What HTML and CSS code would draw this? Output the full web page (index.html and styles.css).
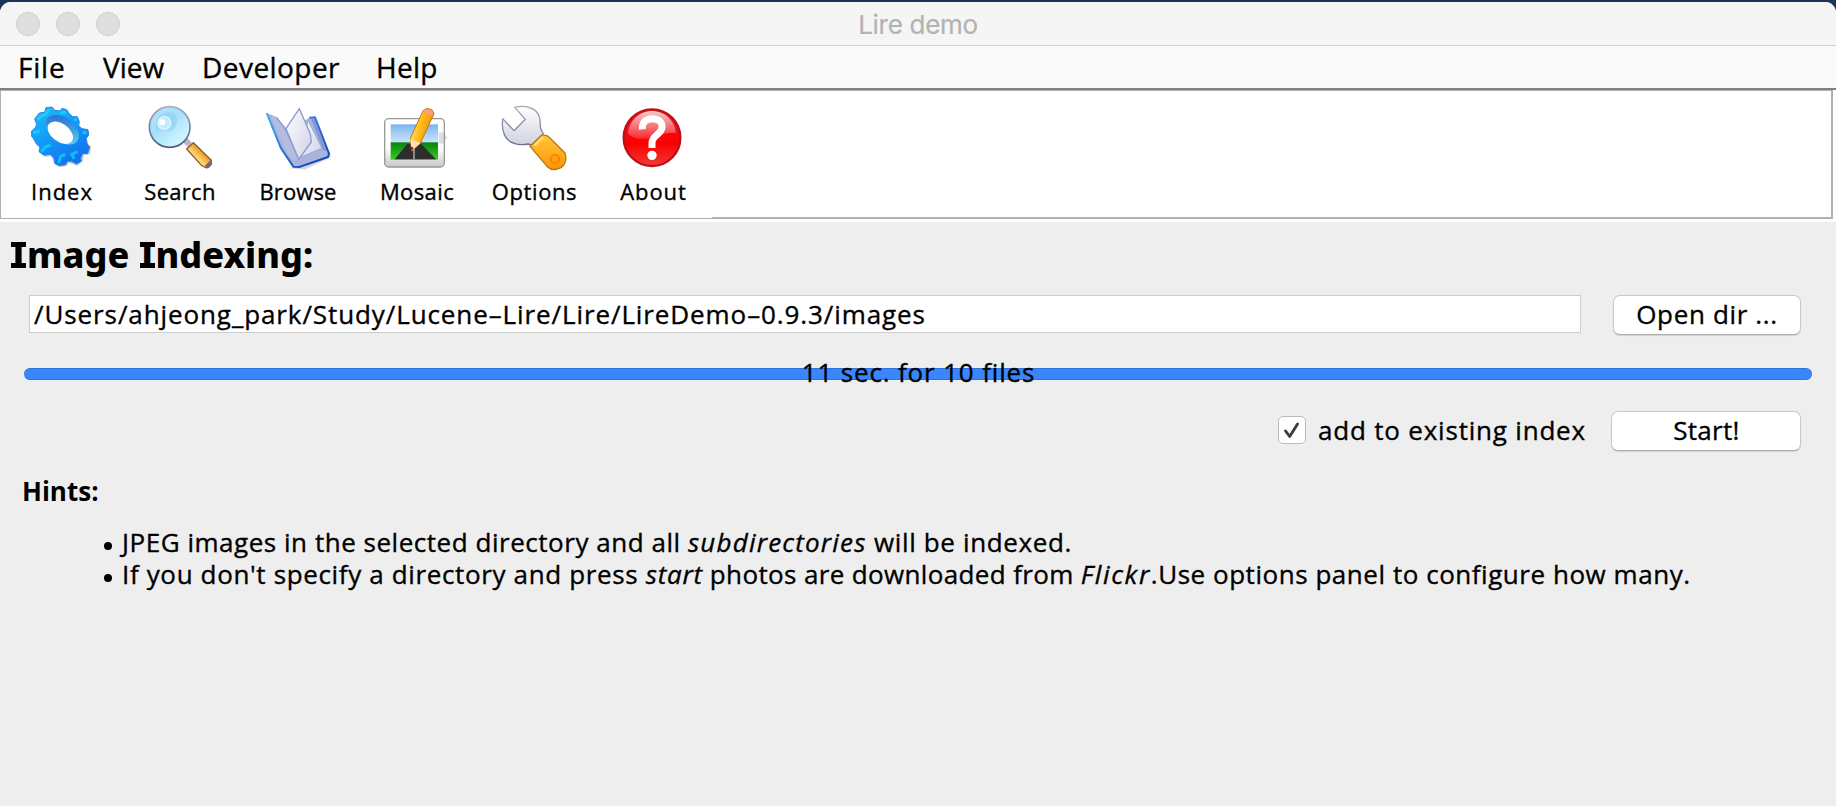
FILE: index.html
```html
<!DOCTYPE html>
<html lang="en">
<head>
<meta charset="utf-8">
<title>Lire demo</title>
<link rel="stylesheet" href="styles.css">
</head>
<body>
<div class="window">
  <header class="titlebar">
    <div class="lights"><i></i><i></i><i></i></div>
    <span class="t title">Lire demo</span>
  </header>
  <nav class="menubar">
    <span class="m-file">File</span>
    <span class="m-view">View</span>
    <span class="m-dev">Developer</span>
    <span class="m-help">Help</span>
  </nav>
  <div class="toolbar">
    <div class="tools">
    <div class="tool">
      <svg viewBox="84 54 204 204">
        <defs>
          <linearGradient id="gear" x1="0" y1="0" x2=".6" y2="1"><stop offset="0" stop-color="#35b4f5"/><stop offset=".35" stop-color="#12a9fb"/><stop offset="1" stop-color="#1372ee"/></linearGradient>
          <linearGradient id="hole" x1="0" y1="0" x2="1" y2="1"><stop offset="0" stop-color="#1e62c8"/><stop offset=".5" stop-color="#3f9ee8"/><stop offset="1" stop-color="#67e4fb"/></linearGradient>
        </defs>
        <path d="M122 206L140 216 154 214 166 240 182 247 202 242 206 234 232 243 250 226 252 210 270 208 274 186 264 176 240 200 160 210z" fill="#b9bcc8" opacity=".7"/>
        <path d="M134 82L138 68 156 66 164 76 180 78 186 70 200 74 208 86 218 95 232 95 238 110 236 122 246 131 264 134 266 150 259 160 262 178 269 186 263 206 248 206 242 219 244 229 230 237 214 229 202 229 197 239 178 242 164 235 162 219 150 208 132 211 117 200 120 186 110 178 100 160 95 154 95 138 106 128 110 118 104 102 118 84z" fill="url(#gear)" stroke="#2385ec" stroke-width="3" stroke-linejoin="round"/>
        <path d="M112 104l14-12 12-4 10-16M100 144l20-6M124 200l12-14 16-6M176 234l6-20 14-6M222 222l-6-14 16-8M180 84l18-2M222 104l8 0M248 142l12 2" stroke="#15dffb" stroke-width="9" fill="none" opacity=".65"/>
        <ellipse cx="187" cy="134" rx="56" ry="36" transform="rotate(37 187 134)" fill="url(#hole)"/>
        <ellipse cx="181" cy="143" rx="43" ry="27" transform="rotate(37 181 143)" fill="#fff"/>
      </svg>
      <span class="t l1">Index</span>
    </div>
    <div class="tool">
      <svg viewBox="438 54 204 204">
        <defs>
          <linearGradient id="lens" x1="0" y1="0" x2=".8" y2="1"><stop offset="0" stop-color="#b4e2fb"/><stop offset=".45" stop-color="#a5e0fb"/><stop offset="1" stop-color="#d9fcff"/></linearGradient>
          <linearGradient id="rim" x1="0" y1="0" x2="0" y2="1"><stop offset="0" stop-color="#a9adc0"/><stop offset="1" stop-color="#545a80"/></linearGradient>
          <linearGradient id="grip" x1="0" y1="1" x2="1" y2="0"><stop offset="0" stop-color="#b36a10"/><stop offset=".4" stop-color="#ffd977"/><stop offset=".6" stop-color="#f0a52e"/><stop offset="1" stop-color="#8e5a20"/></linearGradient>
        </defs>
        <path d="M548 172l14-14 14 16-12 12z" fill="#b7b8cc"/>
        <path d="M560 192l20-19 54 53-2 14-12 9-16-8z" fill="url(#grip)" stroke="#8a5a2a" stroke-width="4"/>
        <path d="M614 243l18-17 5 10-10 13z" fill="#6f6580"/>
        <circle cx="509" cy="126" r="61" fill="url(#lens)" stroke="url(#rim)" stroke-width="5"/>
        <path d="M472 142c-14-34 6-62 38-60 24 4 30 34 8 52-12 8-30 6-42-4" fill="#86cdf2" opacity=".5"/>
        <circle cx="493" cy="114" r="19" fill="#c2ebfc" stroke="#e0f6ff" stroke-width="4"/>
        <circle cx="487" cy="112" r="9" fill="#fff"/>
      </svg>
      <span class="t l2">Search</span>
    </div>
    <div class="tool">
      <svg viewBox="72 54 204 204">
        <defs>
          <linearGradient id="cover" x1="0" y1="0" x2="1" y2="1"><stop offset="0" stop-color="#39b2f2"/><stop offset=".5" stop-color="#2f6fd0"/><stop offset="1" stop-color="#0b3fb8"/></linearGradient>
          <linearGradient id="page" x1="0" y1="0" x2="1" y2="1"><stop offset="0" stop-color="#fff"/><stop offset="1" stop-color="#cfd1e6"/></linearGradient>
        </defs>
        <path d="M150 250l44 4 76-36 6-12-40 20z" fill="#c9c9d0" opacity=".7"/>
        <path d="M80 84l30 12 28 34 22 0 50-34 16 0 42 110-2 10-86 30-22-2-34-54z" fill="#a9b4dd"/>
        <path d="M94 95l18 2 26 40 38 84-18 4-18-22z" fill="#b4bcdf"/>
        <path d="M204 106l42 84-68 28z" fill="url(#page)" stroke="#9ba6d4" stroke-width="3"/>
        <path d="M110 98l26 34 40 88" fill="none" stroke="#8b9ad0" stroke-width="4"/>
        <path d="M80 84L122 188 160 245 178 246 264 216 267 206 225 97 208 98" fill="none" stroke="url(#cover)" stroke-width="6" stroke-linejoin="round"/>
        <path d="M178 71l-40 60 38 92 38-52-3-24z" fill="url(#page)" stroke="#8b9ad0" stroke-width="4"/>
        <path d="M212 100l10 0 38 98-10-2z" fill="#7f98d4"/>
      </svg>
      <span class="t l3">Browse</span>
    </div>
    <div class="tool">
      <svg viewBox="426 54 204 204">
        <defs>
          <linearGradient id="frame" x1="0" y1="0" x2="0" y2="1"><stop offset=".6" stop-color="#fff"/><stop offset="1" stop-color="#c8c8c8"/></linearGradient>
          <linearGradient id="sky" x1="0" y1="0" x2="0" y2="1"><stop offset="0" stop-color="#7cb4f0"/><stop offset="1" stop-color="#d3e8fb"/></linearGradient>
          <linearGradient id="grass" x1="0" y1="0" x2="0" y2="1"><stop offset="0" stop-color="#0a7f14"/><stop offset="1" stop-color="#35cf1a"/></linearGradient>
          <linearGradient id="pencil" x1="0" y1="0" x2="1" y2=".4"><stop offset="0" stop-color="#fff09a"/><stop offset=".5" stop-color="#ffbf1a"/><stop offset="1" stop-color="#e88a10"/></linearGradient>
        </defs>
        <path d="M612 144l10 14-10 14z" fill="#b5b5b5" opacity=".5"/>
        <rect x="434" y="101" width="179" height="145" rx="12" fill="url(#frame)" stroke="#999" stroke-width="4"/>
        <path d="M596 142h16v34h-16z" fill="#aaa" opacity=".4"/>
        <rect x="452" y="118" width="142" height="58" fill="url(#sky)"/>
        <rect x="452" y="172" width="142" height="52" fill="url(#grass)"/>
        <path d="M464 223l38-46 42 0 44 46z" fill="#2d2d2d"/>
        <path d="M522 186v37" stroke="#bbb" stroke-width="4"/>
        <path d="M511 160L549 77 560 70 576 74 582 86 541 175 515 198z" fill="url(#pencil)" stroke="#c8701e" stroke-width="3"/>
        <path d="M511 162l30 12-26 24z" fill="#ffe0b8"/>
        <path d="M512 184l9 4-7 12z" fill="#8c2f12"/>
        <path d="M549 77l10-7 18 6 3 12-5 6-27-12z" fill="#f5a08c" opacity=".75"/>
      </svg>
      <span class="t l4">Mosaic</span>
    </div>
    <div class="tool">
      <svg viewBox="90 54 204 204">
        <defs>
          <linearGradient id="steel" x1="0" y1="0" x2="0" y2="1"><stop offset="0" stop-color="#fff"/><stop offset="1" stop-color="#cfd2de"/></linearGradient>
          <linearGradient id="steelEdge" x1="0" y1="0" x2="0" y2="1"><stop offset="0" stop-color="#a9acba"/><stop offset="1" stop-color="#6a6e98"/></linearGradient>
          <linearGradient id="handle" x1="0" y1="0" x2="0" y2="1"><stop offset="0" stop-color="#ffc83c"/><stop offset="1" stop-color="#ff9406"/></linearGradient>
        </defs>
        <path d="M134 67c32-8 66 2 74 28 4 14 2 26 4 36l8 16-30 34-16-4c-30 6-58-2-70-26-8-16-8-34-6-50l34 36 34-34z" fill="url(#steel)" stroke="url(#steelEdge)" stroke-width="4" stroke-linejoin="round"/>
        <path d="M180 184l36-35 18 4 50 50c8 18 2 40-18 48-12 4-26 2-34-6z" fill="url(#handle)" stroke="#b87516" stroke-width="4"/>
        <path d="M193 182l26-25" stroke="#ffe078" stroke-width="6"/>
        <circle cx="255" cy="222" r="13" fill="#ff9f0a" stroke="#e77f06" stroke-width="4"/>
      </svg>
      <span class="t l5">Options</span>
    </div>
    <div class="tool">
      <svg viewBox="444 54 204 204">
        <defs>
          <linearGradient id="red" x1="0" y1="0" x2="0" y2="1"><stop offset="0" stop-color="#e8202a"/><stop offset=".6" stop-color="#fb0000"/><stop offset="1" stop-color="#f03a3a"/></linearGradient>
          <linearGradient id="gloss" x1="0" y1="0" x2="0" y2="1"><stop offset="0" stop-color="#fff" stop-opacity=".75"/><stop offset="1" stop-color="#fff" stop-opacity=".15"/></linearGradient>
        </defs>
        <circle cx="546" cy="158" r="85" fill="url(#red)" stroke="#bd1018" stroke-width="7"/>
        <path d="M474 146c4-40 34-68 72-68s68 28 72 66c-30-4-50 8-74 14s-50 6-70-12z" fill="url(#gloss)"/>
        <path d="M517 133c-2-22 12-32 30-32 20 0 31 12 29 26-2 22-30 24-30 46v16" fill="none" stroke="#fff" stroke-width="21"/>
        <circle cx="546" cy="211" r="14" fill="#fff"/>
      </svg>
      <span class="t l6">About</span>
    </div>
    </div>
    <div class="toolrest"></div>
  </div>
  <main>
    <h1><span class="slab">I</span>mage <span class="slab">I</span>ndexing:</h1>
    <div class="row pathrow">
      <div class="field">/Users/ahjeong_park/Study/Lucene–Lire/Lire/LireDemo–0.9.3/images</div>
      <div class="btn open">Open dir ...</div>
    </div>
    <div class="progress"><span class="t g">11 sec. for 10 files</span></div>
    <div class="row startrow">
      <div class="check"><svg viewBox="0 0 28 28"><path d="M7 15l4.500 6 8.500-13.500" fill="none" stroke="#3c3c3c" stroke-width="3" stroke-linecap="round" stroke-linejoin="round"/></svg></div>
      <span class="t a">add to existing index</span>
      <div class="btn start">Start!</div>
    </div>
    <div class="hints">Hints:</div>
    <ul>
      <li><span class="k1">JPEG images in the selected directory and all </span><em class="k2">subdirectories</em><span class="k3"> will be indexed.</span></li>
      <li><span class="k4">If you don't specify a directory and press </span><em class="k5">start</em><span class="k6"> photos are downloaded from </span><em class="k7">Flickr</em><span class="k8">.Use options panel to configure how many.</span></li>
    </ul>
  </main>
</div>
</body>
</html>
```
FILE: styles.css
```css
* { box-sizing: border-box; }
body { margin: 0; background: #1d3258; font-family: "Open Sans", "Noto Sans", sans-serif; font-size: 26px; color: #000; }
.window { margin-top: 2px; height: 804px; border-radius: 11px 11px 0 0; overflow: hidden; background: #eee; -webkit-text-stroke: .35px currentColor; }
.t { white-space: pre; }
.titlebar { height: 44px; background: #f5f5f5; border-bottom: 1px solid #cfcfcf; display: grid; grid-template-columns: 1fr auto 1fr; align-items: center; }
.lights { display: flex; gap: 16px; padding-left: 16px; }
.lights i { width: 24px; height: 24px; border-radius: 50%; background: #dedede; border: 1px solid #cdcdcd; }
.title { font-family: Inter, sans-serif; color: #b2b2b2; letter-spacing: -.3px; padding-top: 2px; -webkit-text-stroke: .2px #b2b2b2; }
.menubar { height: 44px; background: #fafafa; border-bottom: 2px solid #808080; display: flex; font-size: 28px; line-height: 42px; }
.m-file { width: 85px; padding-left: 18px; letter-spacing: .8px; }
.m-view { width: 100px; padding-left: 18px; }
.m-dev { width: 174px; padding-left: 17px; letter-spacing: .45px; }
.m-help { padding-left: 17px; letter-spacing: .3px; }
.toolbar { height: 132px; background: #fff; display: flex; padding: 0 3px 3px 0; }
.tools { width: 712px; display: flex; border: 1px solid #b0b0b0; border-right: 0; padding-left: 2px; }
.toolrest { flex: 1; border: solid #b0b0b0; border-width: 1px 2px 2px 0; }
.tool { width: 118px; padding-top: 12px; display: flex; flex-direction: column; align-items: center; font-size: 22px; line-height: 30px; }
.tool svg { width: 68px; height: 68px; margin-bottom: 5px; }
.l1 { letter-spacing: 1px; }
.l2 { letter-spacing: .3px; }
.l3 { letter-spacing: .1px; }
.l4 { letter-spacing: .4px; padding-left: 2px; }
.l5 { letter-spacing: .6px; padding-left: 1px; }
.l6 { letter-spacing: .9px; padding-left: 3px; }
h1 { margin: 0; padding: 8px 0 0 10px; font: 800 36px/50px "Noto Sans", sans-serif; -webkit-text-stroke: 0; }
.slab { display: inline-block; width: 17px; text-align: center; background: linear-gradient(#000, #000) 1px 12px / 15px 5px no-repeat, linear-gradient(#000, #000) 1px 33px / 15px 5px no-repeat; }
.row { display: flex; }
.pathrow { padding: 15px 35px 0 29px; justify-content: space-between; }
.field { width: 1552px; height: 38px; background: #fff; border: 1px solid #ccc; padding-left: 4px; line-height: 36px; letter-spacing: .9px; }
.btn { height: 40px; border-radius: 7px; background: #fff; border: 1px solid #c9c9c9; border-bottom-color: #adadad; box-shadow: 0 1px 1px rgba(0,0,0,.12); text-align: center; line-height: 36px; }
.open { width: 188px; letter-spacing: .65px; }
.progress { margin: 33px 24px 0; height: 12px; border-radius: 6px; background: #3a87fd; border: solid #2f72dc; border-width: 1px 0; display: flex; justify-content: center; align-items: center; }
.g { letter-spacing: .85px; padding: 0 0 4px 1px; }
.startrow { margin-top: 31px; padding-right: 35px; justify-content: flex-end; }
.check { width: 28px; height: 28px; margin: 5px 12px 0 0; border: 1px solid #bbb; border-radius: 5px; background: #fff; }
.check svg { display: block; width: 26px; height: 26px; }
.a { width: 267px; margin-right: 26px; line-height: 38px; letter-spacing: .8px; }
.start { width: 190px; letter-spacing: .3px; padding-left: 1px; }
.hints { padding: 22px 0 0 22px; font-weight: 700; line-height: 36px; -webkit-text-stroke: 0; }
ul { margin: 17px 0 0; padding: 0 0 0 122px; line-height: 32px; list-style: none; }
li { white-space: pre; }
li::before { content: ""; display: inline-block; width: 8px; height: 8px; border-radius: 50%; background: #000; margin: 0 10px 2px -18px; }
.k1 { letter-spacing: .53px; }
.k2 { letter-spacing: 1.2px; }
.k3 { letter-spacing: .63px; }
.k4 { letter-spacing: .64px; }
.k5 { letter-spacing: .74px; }
.k6 { letter-spacing: .36px; }
.k7 { letter-spacing: 1.6px; }
.k8 { letter-spacing: .54px; }
```
